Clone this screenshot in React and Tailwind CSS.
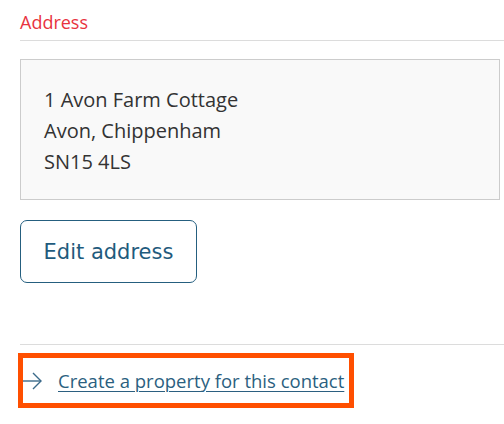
export default function App() {
    const font = { fontFamily: '"Open Sans", "Noto Sans", sans-serif' }

    return (
        <div className="w-[504px] h-[424px] bg-white overflow-hidden pl-5" style={font}>
            <div className="pt-[10px] pb-[6px] text-[18px] leading-[24px] text-[#e8333f] border-b border-[#dcdcdc] -mr-1">
                Address
            </div>

            <div className="mt-[18px] mr-1 h-[141px] bg-[#f9f9f9] border border-[#cccccc] px-[23px] py-[24px] text-[20px] leading-[31px] text-[#333333]">
                <div>1 Avon Farm Cottage</div>
                <div>Avon, Chippenham</div>
                <div>SN15 4LS</div>
            </div>

            <button
                className="mt-5 w-[177px] h-[63px] pt-[3px] rounded-[7px] border border-[#255f7f] text-[#1f5b7d] text-[21px] bg-white"
                style={{ fontFamily: '"DejaVu Sans", Verdana, sans-serif' }}
            >
                Edit address
            </button>

            <div className="mt-[61px] border-t border-[#dcdcdc] -mr-1" />

            <div className="relative mt-[8px] h-[55px] w-[336px] -ml-[2px]">
                <div className="absolute inset-0 border-[5px] border-[#ff4f00]" />
                <div className="flex items-center h-full pl-[3px]">
                    <svg width="22" height="18" viewBox="0 0 22 18" fill="none" stroke="#3b6a8a" strokeWidth="1.4" className="shrink-0">
                        <path d="M1 9 H20" />
                        <path d="M12 1 L20 9 L12 17" />
                    </svg>
                    <a href="#" className="ml-[15px] text-[18.5px] text-[#2b5f80] underline underline-offset-[3px] decoration-1 leading-6">
                        Create a property for this contact
                    </a>
                </div>
            </div>
        </div>
    )
}
